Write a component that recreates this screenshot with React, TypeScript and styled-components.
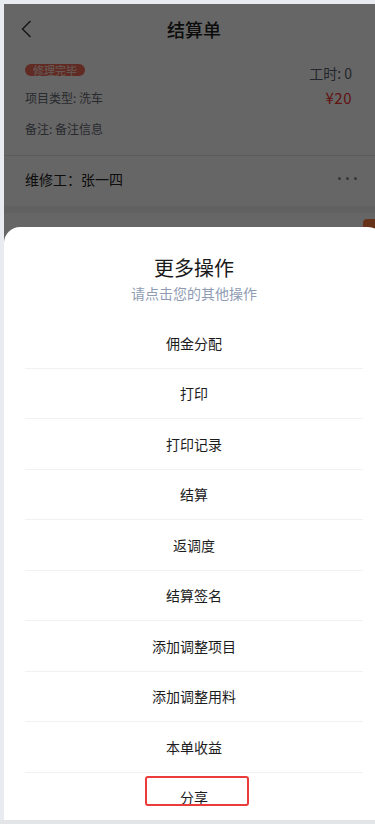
import React from 'react';
import styled, { createGlobalStyle } from 'styled-components';

const Global = createGlobalStyle`
  html, body { margin: 0; padding: 0; overflow: hidden; background: #e8ecf1; }
  body { font-family: "Noto Sans CJK SC", "Noto Sans", sans-serif; }
  * { box-sizing: border-box; }
`;

const Frame = styled.div`
  width: 375px;
  height: 824px;
  padding: 4px 0 4px 4px;
  background: #e8ecf1;
  border-bottom: 4px solid #e2e4e8;
  overflow: hidden;
`;

const Page = styled.div`
  position: relative;
  width: 380px;
  height: 816px;
  overflow: hidden;
  background: #f2f3f6;
`;

const Header = styled.div`
  height: 50px;
  background: #ffffff;
  display: grid;
  grid-template-columns: 60px 1fr 60px;
  align-items: center;
`;

const Back = styled.div`
  padding-left: 17px;
  display: flex;
  align-items: center;
`;

const Title = styled.div`
  text-align: center;
  font-size: 18px;
  font-weight: 500;
  color: #1f1f1f;
`;

const Card = styled.div`
  background: #ffffff;
  padding: 0 32px 16px 21px;
  border-bottom: 1px solid #e6e7ea;
`;

const TopRow = styled.div`
  height: 28px;
  display: flex;
  justify-content: space-between;
`;

const Tag = styled.span`
  align-self: flex-start;
  margin-top: 10px;
  height: 12px;
  line-height: 12px;
  padding: 0 8px;
  border-radius: 6px;
  background: #f26b57;
  color: #fde5e0;
  font-size: 11px;
`;

const Hours = styled.span`
  align-self: flex-end;
  line-height: 18px;
  font-size: 14px;
  color: #5a6070;
`;

const InfoRow = styled.div<{ $top: number }>`
  margin-top: ${p => p.$top}px;
  display: flex;
  justify-content: space-between;
  align-items: center;
  line-height: 20px;
`;

const Info = styled.span`
  font-size: 12px;
  color: #666a74;
`;

const Price = styled.span`
  font-size: 15px;
  color: #f2302e;
  letter-spacing: 0.5px;
`;

const WorkerRow = styled.div`
  height: 50px;
  background: #ffffff;
  padding: 0 27px 5px 21px;
  display: flex;
  align-items: center;
  justify-content: space-between;
`;

const Worker = styled.span`
  font-size: 14px;
  color: #222;
`;

const Dots = styled.span`
  display: flex;
  gap: 5px;
  & > i {
    width: 3px;
    height: 3px;
    border-radius: 50%;
    background: #888;
  }
`;

const NextCard = styled.div`
  margin-top: 7px;
  height: 60px;
  background: #ffffff;
  display: flex;
  justify-content: flex-end;
  padding-top: 6px;
`;

const OrangeTab = styled.div`
  width: 21px;
  height: 26px;
  background: #ff7d3c;
  border-radius: 4px 0 0 4px;
`;

const Mask = styled.div`
  position: absolute;
  inset: 0;
  background: rgba(0, 0, 0, 0.6);
`;

const Sheet = styled.div`
  position: absolute;
  left: 0;
  right: 0;
  top: 223px;
  bottom: 0;
  background: #ffffff;
  border-radius: 16px 16px 0 0;
  padding-top: 27px;
  display: flex;
  flex-direction: column;
  align-items: stretch;
`;

const SheetTitle = styled.div`
  text-align: center;
  font-size: 20px;
  line-height: 28px;
  color: #1a1a1a;
`;

const SheetSub = styled.div`
  margin-top: 1px;
  text-align: center;
  font-size: 14px;
  line-height: 20px;
  color: #8f9bb3;
`;

const List = styled.div`
  margin: 15px 21px 0 21px;
`;

const Item = styled.div`
  height: 50.5px;
  border-bottom: 1px solid #f0f1f3;
  display: flex;
  align-items: center;
  justify-content: center;
  font-size: 14px;
  color: #1c1c1c;
`;

const Highlight = styled.div`
  position: absolute;
  left: 141px;
  top: 772px;
  width: 104px;
  height: 30px;
  border: 2px solid #ec3b3b;
  border-radius: 3px;
`;

const actions = [
  '佣金分配',
  '打印',
  '打印记录',
  '结算',
  '返调度',
  '结算签名',
  '添加调整项目',
  '添加调整用料',
  '本单收益',
  '分享',
];

export default function App() {
  return (
    <>
      <Global />
      <Frame>
        <Page>
          <Header>
            <Back>
              <svg width="11" height="18" viewBox="0 0 11 18" fill="none">
                <polyline points="9.5,1 1.5,9 9.5,17" stroke="#333" strokeWidth="1.4" />
              </svg>
            </Back>
            <Title>结算单</Title>
            <span />
          </Header>
          <Card>
            <TopRow>
              <Tag>修理完毕</Tag>
              <Hours>工时: 0</Hours>
            </TopRow>
            <InfoRow $top={6}>
              <Info>项目类型: 洗车</Info>
              <Price>¥20</Price>
            </InfoRow>
            <InfoRow $top={11}>
              <Info>备注: 备注信息</Info>
            </InfoRow>
          </Card>
          <WorkerRow>
            <Worker>维修工：张一四</Worker>
            <Dots>
              <i />
              <i />
              <i />
            </Dots>
          </WorkerRow>
          <NextCard>
            <OrangeTab />
          </NextCard>
          <Mask />
          <Sheet>
            <SheetTitle>更多操作</SheetTitle>
            <SheetSub>请点击您的其他操作</SheetSub>
            <List>
              {actions.map(a => (
                <Item key={a}>{a}</Item>
              ))}
            </List>
          </Sheet>
          <Highlight />
        </Page>
      </Frame>
    </>
  );
}
